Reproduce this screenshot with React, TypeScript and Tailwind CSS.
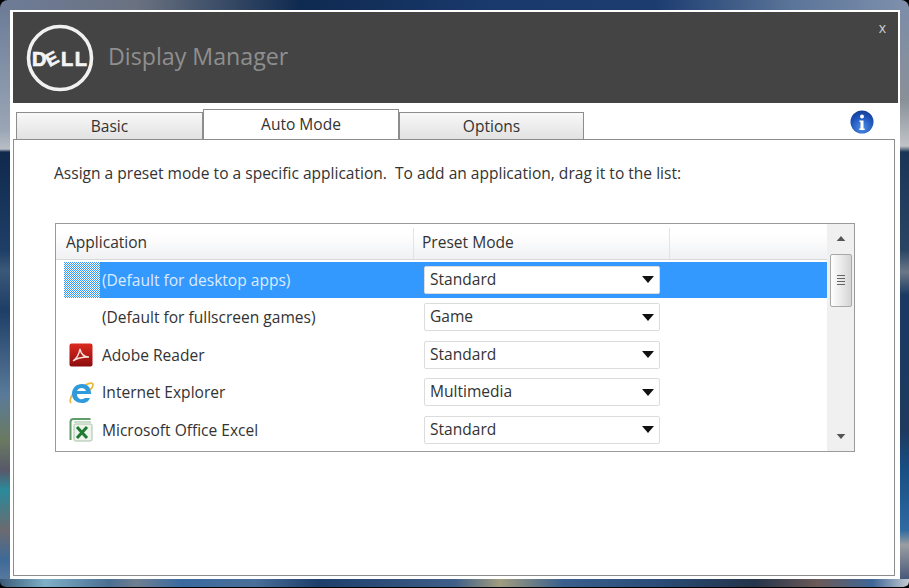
const font = '[font-family:"Open_Sans",sans-serif]';

const rows = [
  { label: '(Default for desktop apps)', mode: 'Standard', icon: 'dither', selected: true },
  { label: '(Default for fullscreen games)', mode: 'Game', icon: 'none' },
  { label: 'Adobe Reader', mode: 'Standard', icon: 'pdf' },
  { label: 'Internet Explorer', mode: 'Multimedia', icon: 'ie' },
  { label: 'Microsoft Office Excel', mode: 'Standard', icon: 'excel' },
];

function DellLogo() {
  return (
    <svg width="70" height="70" viewBox="0 0 70 70" className="shrink-0">
      <circle cx="35" cy="35" r="31.5" fill="none" stroke="#f1f1f1" strokeWidth="3.6" />
      <g fontFamily="Liberation Sans" fontWeight="700" fontSize="20" fill="#f4f4f4" stroke="#f4f4f4" strokeWidth="0.7">
        <text x="7" y="43">D</text>
        <text x="21" y="42" fontSize="18" transform="rotate(-28 27 36)">E</text>
        <text x="36" y="43" textLength="26">LL</text>
      </g>
    </svg>
  );
}

function InfoBall() {
  return (
    <svg width="24" height="24" viewBox="0 0 24 24">
      <defs>
        <radialGradient id="ball" cx="0.5" cy="0.75" r="0.8">
          <stop offset="0" stopColor="#4f8fe8" />
          <stop offset="0.6" stopColor="#1f56bd" />
          <stop offset="1" stopColor="#123a8c" />
        </radialGradient>
      </defs>
      <circle cx="12" cy="12" r="11.5" fill="url(#ball)" />
      <circle cx="12" cy="6.5" r="2" fill="#fff" />
      <path d="M9.5 10.5h4v8h1.2v1.5H9.3v-1.5h1.2v-6.5h-1z" fill="#fff" />
    </svg>
  );
}

function AppIcon({ kind }: { kind: string }) {
  if (kind === 'dither') {
    // selected row's blank icon, blended with the highlight colour
    return (
      <svg width="36" height="36" viewBox="0 0 36 36" shapeRendering="crispEdges">
        <defs>
          <pattern id="dither" width="2" height="2" patternUnits="userSpaceOnUse">
            <rect width="2" height="2" fill="#ffffff" />
            <rect width="1" height="1" fill="#3399ff" />
            <rect x="1" y="1" width="1" height="1" fill="#3399ff" />
          </pattern>
        </defs>
        <rect width="36" height="36" fill="url(#dither)" />
      </svg>
    );
  }
  if (kind === 'pdf') {
    return (
      <svg width="24" height="24" viewBox="0 0 24 24" className="ml-[5px]">
        <defs>
          <linearGradient id="pdf" x1="0" y1="0" x2="0" y2="1">
            <stop offset="0" stopColor="#dc2a20" />
            <stop offset="1" stopColor="#8e0c0c" />
          </linearGradient>
        </defs>
        <rect x="0.5" y="0.5" width="23" height="23" rx="2" fill="url(#pdf)" />
        <path d="M4 18c3-2 6-7 7-12 1 5 3 8 9 8-5 0-11 0-16 4z" fill="none" stroke="#f7dcd6" strokeWidth="1.4" />
      </svg>
    );
  }
  if (kind === 'ie') {
    return (
      <svg width="25" height="25" viewBox="0 0 25 25" className="ml-[5px]">
        <path d="M2 23c-3-4 4-15 14-18 5-2 8-3 8 0 0 2-2 4-3 5" fill="none" stroke="#e9bb3c" strokeWidth="1.8" />
        <path d="M8 14h14c0-6-3-10-9-10S3 8 3 14s5 9 10 9c4 0 7-2 8-5h-5c-2 2-8 2-8-4zm0-3c1-4 8-4 9 0z" fill="#2f9bdc" />
      </svg>
    );
  }
  if (kind === 'excel') {
    return (
      <svg width="24" height="24" viewBox="0 0 24 24" className="ml-[5px]">
        <path d="M1.5 22V4c0-2 1-3 3-3h17" fill="none" stroke="#5f9e68" strokeWidth="2" />
        <path d="M5 4h16v1" fill="none" stroke="#b7d4b8" strokeWidth="1.5" />
        <rect x="5" y="6" width="18" height="17" rx="1.5" fill="#eef3ec" stroke="#a9bfa9" />
        <path d="M8 9l10 11M18 9L8 20" stroke="#1f7a33" strokeWidth="3" />
      </svg>
    );
  }
  return null;
}

function Caret({ className }: { className: string }) {
  return (
    <svg width="12" height="7" viewBox="0 0 12 7" className={className}>
      <path d="M0 0h12L6 7z" fill="currentColor" />
    </svg>
  );
}

function Row({ row }: { row: (typeof rows)[number] }) {
  return (
    <div className="flex h-[37.5px] items-start">
      <div className="flex h-[36px] w-[36px] shrink-0 items-center">
        <AppIcon kind={row.icon} />
      </div>
      <div className={`flex h-[36px] flex-1 items-center ${row.selected ? 'bg-[#3399ff]' : ''}`}>
        <span className={`w-[324px] shrink-0 pl-[2px] pt-[2px] ${row.selected ? 'text-[#dcebff]' : 'text-[#333]'}`}>{row.label}</span>
        <div className="flex h-[28px] w-[236px] items-center justify-between rounded-[2px] border border-[#dcdcdc] bg-white pl-[5px] pr-[5px] text-[#333]">
          <span>{row.mode}</span>
          <Caret className="text-[#111]" />
        </div>
      </div>
    </div>
  );
}

export default function App() {
  return (
    <div className={`flex h-[588px] w-[909px] flex-col overflow-hidden bg-black text-[15.55px] leading-none ${font}`}>
      <div className="h-[10px] shrink-0 rounded-t-[8px] bg-[linear-gradient(90deg,#6e7c98_0%,#6a7280_15%,#0f2a50_33%,#1a3a6e_55%,#1c3c70_72%,#5a7498_87%,#7f90ad_100%)]" />
      <div className="flex flex-1">
        <div className="w-[10px] shrink-0 bg-[linear-gradient(180deg,#6d7d98_0px,#9aa6b6_120px,#b8bec6_139px,#10294d_142px,#1f3e66_240px,#3a5878_260px,#1f3e66_300px,#5a7a9a_385px,#6a7a60_430px,#58586a_460px,#2a8a9a_480px,#6b6a70_520px,#3e6a98_550px,#56789e_568px)]" />
        <div className="flex flex-1 flex-col border-l border-t border-white bg-white pb-[3px] pl-[2px] pr-[5px] pt-[1px]">
          <div className="mr-[-3px] flex h-[91px] shrink-0 items-start justify-between bg-[#444] pr-[12px]">
            <div className="flex h-full items-center gap-[13px] pl-[12px]">
              <DellLogo />
              <span className="pb-[2px] text-[23.2px] text-[#8f8f8f]">Display Manager</span>
            </div>
            <span className="pt-[9px] text-[14px] text-[#cfcfcf]">x</span>
          </div>
          <div className="flex h-[36px] shrink-0 items-end pl-[3px]">
            <div className="flex h-[27px] w-[187px] items-center justify-center border border-b-0 border-[#8d8d8d] bg-[linear-gradient(180deg,#f8f8f8,#e2e2e2)] pt-[2px] text-[#333]">Basic</div>
            <div className="flex h-[30px] w-[196px] items-center justify-center border-x border-t border-[#8d8d8d] bg-white text-[#333]">Auto Mode</div>
            <div className="flex h-[27px] w-[185px] items-center justify-center border border-b-0 border-[#8d8d8d] bg-[linear-gradient(180deg,#f8f8f8,#e2e2e2)] pt-[2px] text-[#333]">Options</div>
            <div className="mb-[5px] ml-[266px]">
              <InfoBall />
            </div>
          </div>
          <div className="flex flex-1 flex-col border border-[#8d8d8d] pl-[40px] pr-[38px] pt-[26px]">
            <p className="whitespace-pre text-[#333]">Assign a preset mode to a specific application.  To add an application, drag it to the list:</p>
            <div className="ml-[1px] mt-[41px] flex h-[229px] w-[800px] border border-[#9a9a9a]">
              <div className="flex flex-1 flex-col">
                <div className="flex h-[36px] shrink-0 items-center border-b border-[#d9d9d9] bg-[linear-gradient(180deg,#ffffff_30%,#f0f1f3)] pt-[4px] text-[#333]">
                  <div className="flex h-full w-[358px] items-center border-r border-[#e3e3e3] pl-[10px]">Application</div>
                  <div className="flex h-full w-[256px] items-center border-r border-[#e3e3e3] pl-[8px]">Preset Mode</div>
                </div>
                <div className="flex flex-col pl-[8px] pt-[2px]">
                  {rows.map((row) => (
                    <Row key={row.label} row={row} />
                  ))}
                </div>
              </div>
              <div className="flex w-[27px] shrink-0 flex-col items-center bg-[#f0f0f0]">
                <Caret className="mt-[12px] h-[5px] rotate-180 text-[#555]" />
                <div className="mt-[13px] flex h-[53px] w-[22px] flex-col items-center justify-center gap-[2px] rounded-[2px] border border-[#a8a8a8] bg-[linear-gradient(90deg,#ffffff,#d5d5d5)]">
                  <div className="h-[1px] w-[8px] bg-[#666]" />
                  <div className="h-[1px] w-[8px] bg-[#666]" />
                  <div className="h-[1px] w-[8px] bg-[#666]" />
                  <div className="h-[1px] w-[8px] bg-[#666]" />
                </div>
                <Caret className="mt-auto mb-[12px] h-[5px] text-[#555]" />
              </div>
            </div>
          </div>
        </div>
        <div className="w-[9px] shrink-0 bg-[linear-gradient(180deg,#7d8da8_0px,#8a9098_90px,#c0c4c8_136px,#1a3555_142px,#2a4564_240px,#6a7888_262px,#1a3a62_285px,#1e3a5e_420px,#184e84_460px,#2f6aa0_520px,#9a9ea2_535px,#4a5a7a_568px)]" />
      </div>
      <div className="h-[9px] shrink-0 rounded-b-[6px] border-b border-black bg-[linear-gradient(90deg,#3b5a78_0%,#7fb0c8_5%,#4a6f92_12%,#6f7f90_15%,#3a6aa0_20%,#4a6f98_28%,#1d3f6a_35%,#3f5e88_50%,#a09c80_55%,#3a5f8c_62%,#2b4d78_72%,#25344a_83%,#6b5a58_90%,#3e6696_96%,#c4cbd2_100%)]" />
    </div>
  );
}
